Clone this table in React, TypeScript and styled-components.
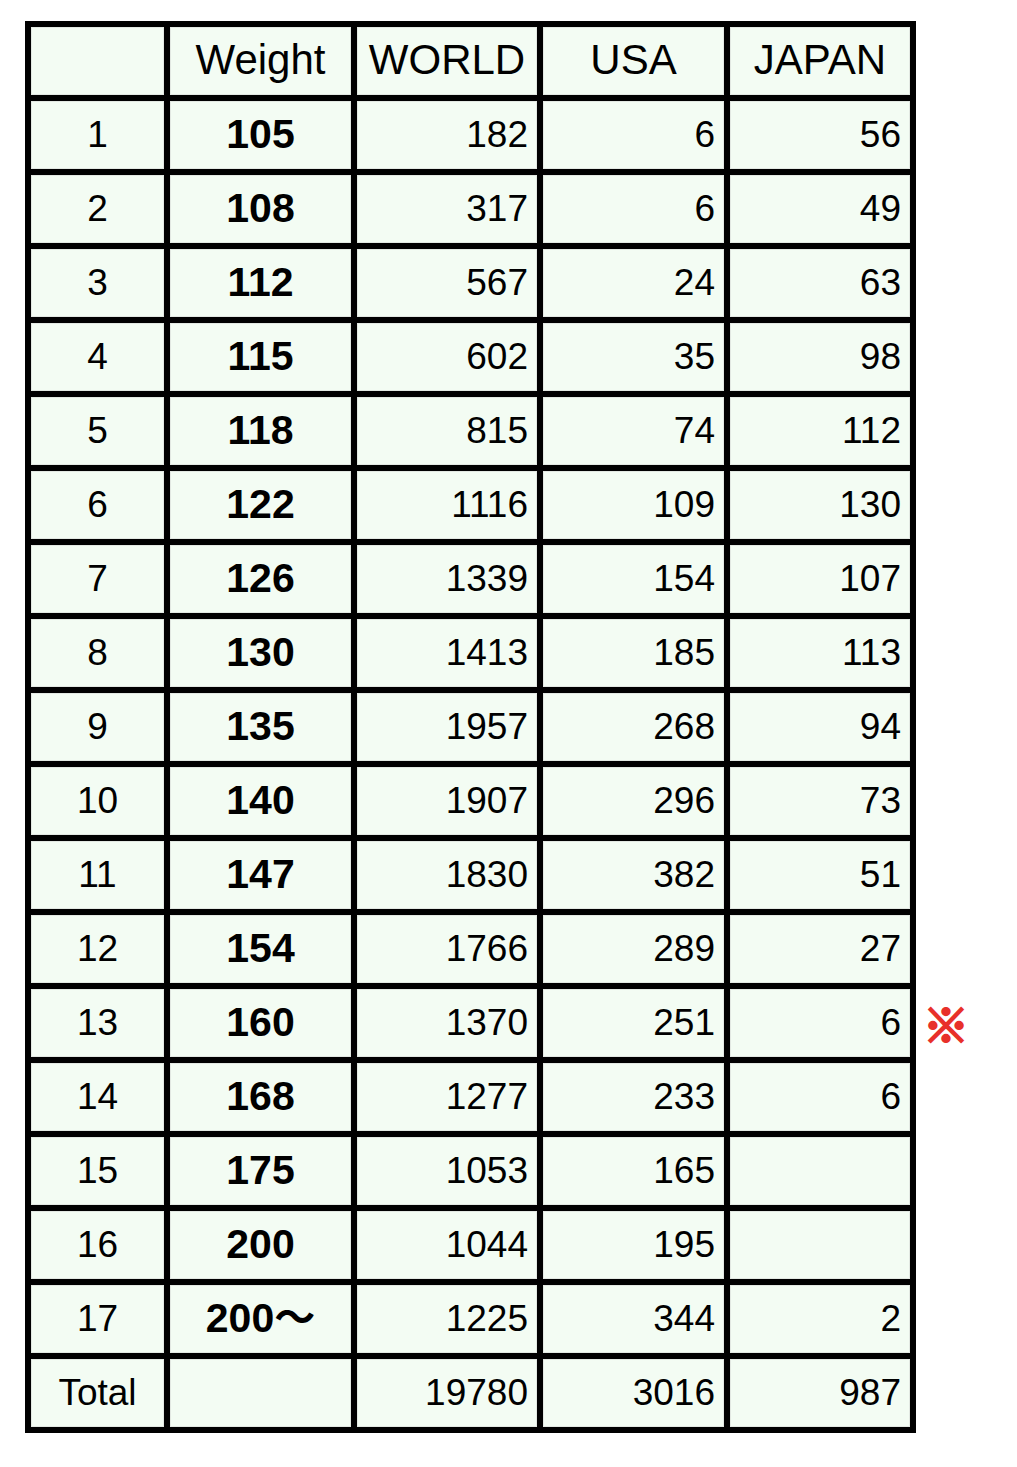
import React from "react";
import styled, { createGlobalStyle } from "styled-components";

const GlobalStyle = createGlobalStyle`
  html, body {
    margin: 0;
    padding: 0;
    background: #ffffff;
  }
  body {
    font-family: "Liberation Sans", Arial, "Noto Sans CJK JP", sans-serif;
    color: #000;
  }
`;

const Page = styled.div`
  padding: 21px 0 40px 25px;
`;

const Grid = styled.div`
  display: grid;
  grid-template-columns: 133px 181px 180px 181px 180px;
  grid-auto-rows: 68px;
  gap: 6px;
  padding: 6px;
  background: #000;
  width: max-content;
`;

type Align = "center" | "right";

const Cell = styled.div<{ $align: Align; $header?: boolean; $bold?: boolean }>`
  position: relative;
  display: flex;
  align-items: center;
  justify-content: ${(p) => (p.$align === "right" ? "flex-end" : "center")};
  padding: ${(p) => (p.$align === "right" ? "0 9px 2px 0" : "0 0 2px 0")};
  background: #f3fcf3;
  box-shadow: inset 0 0 0 1px #e2e8e2;
  font-family: "Liberation Sans", Arial, "Noto Sans CJK JP", sans-serif;
  font-size: ${(p) => (p.$header ? "42px" : p.$bold ? "41px" : "37px")};
  font-weight: ${(p) => (p.$bold ? 700 : 400)};
  line-height: 1;
  white-space: nowrap;
`;

const Note = styled.span`
  position: absolute;
  left: calc(100% + 13px);
  top: 50%;
  transform: translateY(-52%);
  color: #e8302a;
  -webkit-text-stroke: 2.4px #e8302a;
  font-family: "Noto Sans CJK JP", sans-serif;
  font-size: 46px;
  font-weight: 700;
  line-height: 1;
`;

const headers = ["", "Weight", "WORLD", "USA", "JAPAN"];

type Row = { n: string; w: string; world: string; usa: string; japan: string; note?: boolean };

const rows: Row[] = [
  { n: "1", w: "105", world: "182", usa: "6", japan: "56" },
  { n: "2", w: "108", world: "317", usa: "6", japan: "49" },
  { n: "3", w: "112", world: "567", usa: "24", japan: "63" },
  { n: "4", w: "115", world: "602", usa: "35", japan: "98" },
  { n: "5", w: "118", world: "815", usa: "74", japan: "112" },
  { n: "6", w: "122", world: "1116", usa: "109", japan: "130" },
  { n: "7", w: "126", world: "1339", usa: "154", japan: "107" },
  { n: "8", w: "130", world: "1413", usa: "185", japan: "113" },
  { n: "9", w: "135", world: "1957", usa: "268", japan: "94" },
  { n: "10", w: "140", world: "1907", usa: "296", japan: "73" },
  { n: "11", w: "147", world: "1830", usa: "382", japan: "51" },
  { n: "12", w: "154", world: "1766", usa: "289", japan: "27" },
  { n: "13", w: "160", world: "1370", usa: "251", japan: "6", note: true },
  { n: "14", w: "168", world: "1277", usa: "233", japan: "6" },
  { n: "15", w: "175", world: "1053", usa: "165", japan: "" },
  { n: "16", w: "200", world: "1044", usa: "195", japan: "" },
  { n: "17", w: "200〜", world: "1225", usa: "344", japan: "2" },
];

export default function App() {
  return (
    <>
      <GlobalStyle />
      <Page>
        <Grid role="table">
          {headers.map((h, i) => (
            <Cell key={"h" + i} $align="center" $header role="columnheader">
              {h}
            </Cell>
          ))}
          {rows.map((r) => (
            <React.Fragment key={r.n}>
              <Cell $align="center">{r.n}</Cell>
              <Cell $align="center" $bold>
                {r.w}
              </Cell>
              <Cell $align="right">{r.world}</Cell>
              <Cell $align="right">{r.usa}</Cell>
              <Cell $align="right">
                {r.japan}
                {r.note && <Note>※</Note>}
              </Cell>
            </React.Fragment>
          ))}
          <Cell $align="center">Total</Cell>
          <Cell $align="center" $bold></Cell>
          <Cell $align="right">19780</Cell>
          <Cell $align="right">3016</Cell>
          <Cell $align="right">987</Cell>
        </Grid>
      </Page>
    </>
  );
}
